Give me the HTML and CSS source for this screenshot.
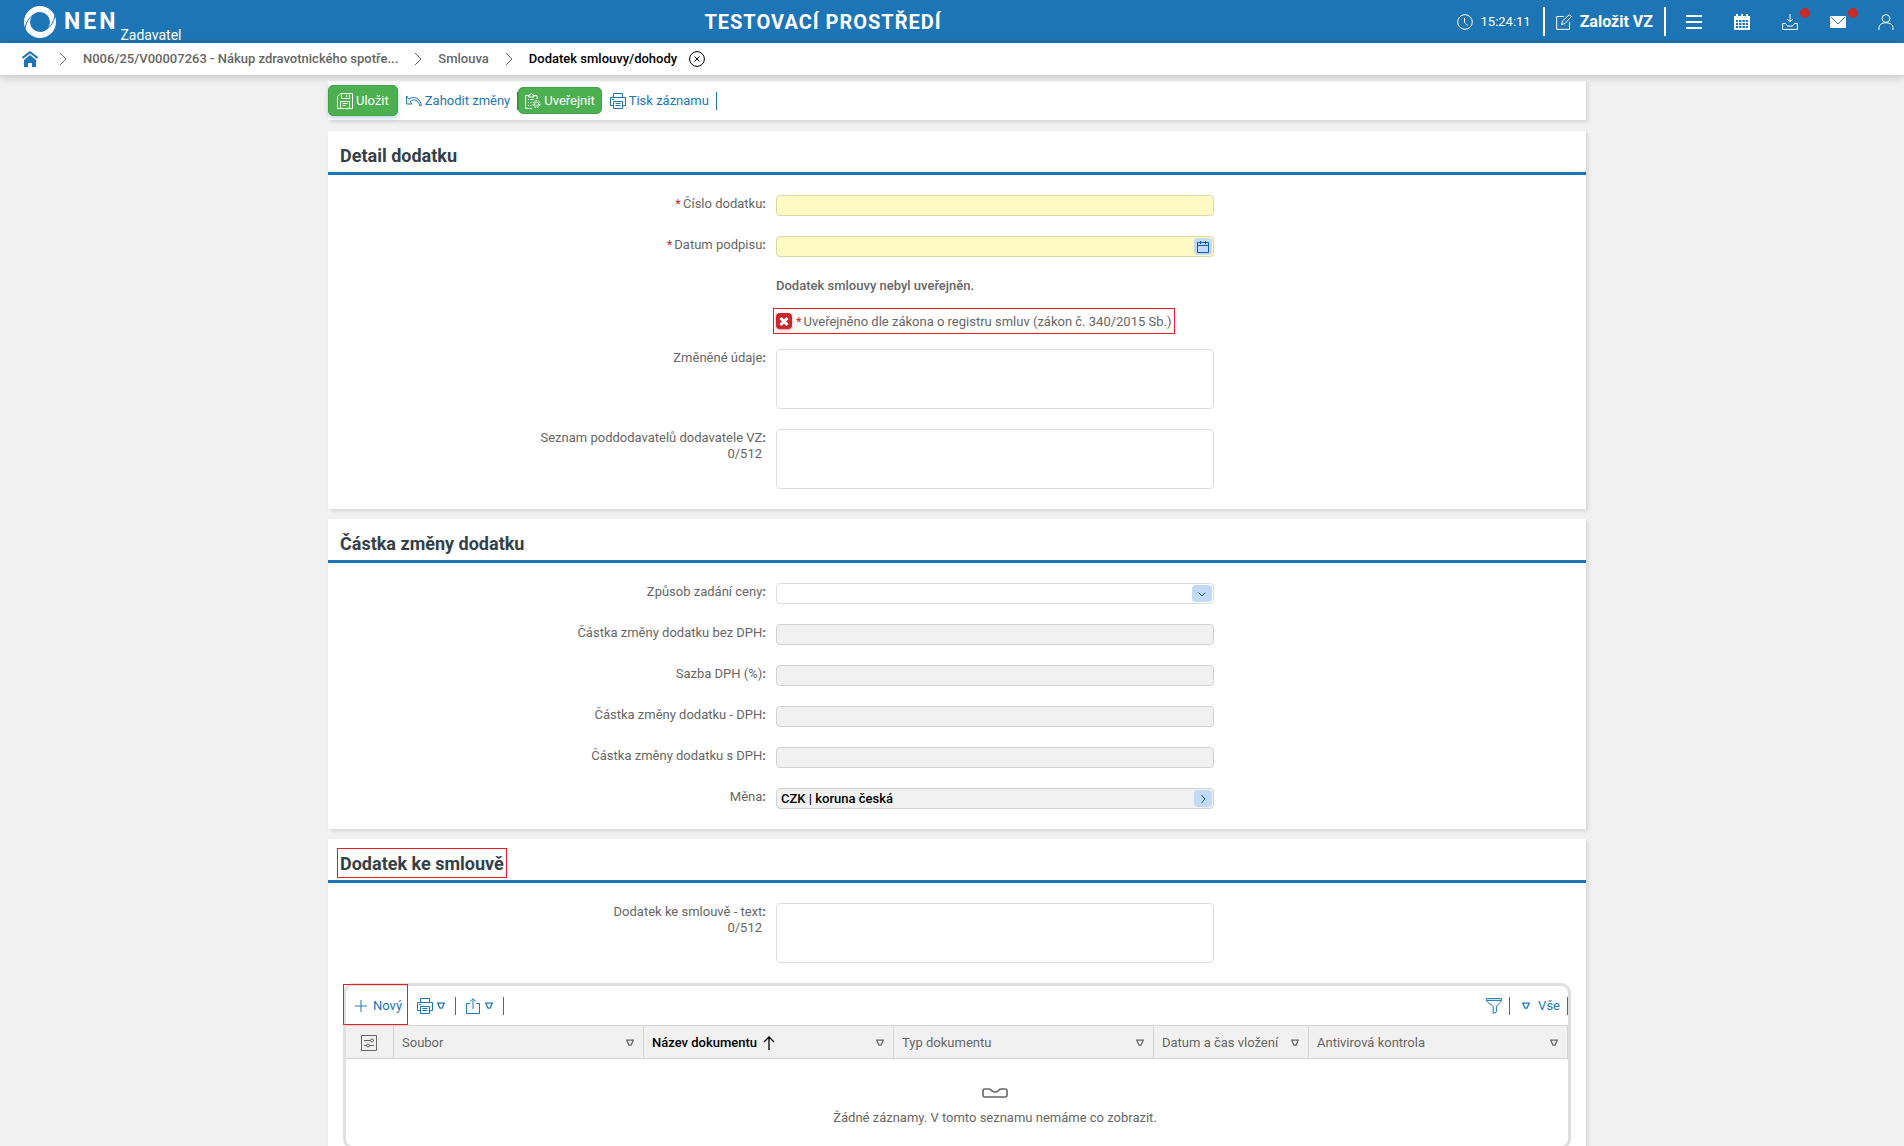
FILE: index.html
```html
<!DOCTYPE html>
<html lang="cs">
<head>
    <meta charset="utf-8">
    <title>NEN - Dodatek smlouvy/dohody</title>
    <meta name="viewport" content="width=device-width, initial-scale=1">
    <link rel="stylesheet" href="styles.css">
</head>
<body>
<svg class="sprite" aria-hidden="true">
    <symbol id="i-chevron" viewBox="0 0 16 16"><path d="M5 2l6 6-6 6"/></symbol>
    <symbol id="i-triangle" viewBox="0 0 8 8"><path d="M.8 1.2h6.4L5 6.2H3z"/></symbol>
    <symbol id="i-printer" viewBox="0 0 16 16"><path d="M3.5 4.500V.5h9v4M3.500 12.500h-3v-8h15v8h-3M3.500 8.500h9v7h-9zM5.500 10.500h5M5.500 12.500h5M2 6.500h2"/></symbol>
</svg>

<header class="topbar">
    <a class="brand" href="#">
        <svg width="32" height="32" viewBox="0 0 32 32">
            <path class="solid" fill-rule="evenodd" d="M16 0a16 16 0 0 1 0 32 16 16 0 0 1 0-32zM16 6a10 10 0 0 0 0 20 10 10 0 0 0 0-20z"/>
            <path class="swirl" d="M1 23C2 15 7 8 15 6.500M31 9c-1 8-6 15-14 16.500"/>
        </svg>
        <span class="brand-name">NEN</span>
        <span class="brand-role">Zadavatel</span>
    </a>
    <strong class="environment">TESTOVACÍ PROSTŘEDÍ</strong>
    <div class="tools">
        <span class="clock">
            <svg class="icon" viewBox="0 0 16 16"><circle cx="8" cy="8" r="7.300"/><path d="M7.500 4v4.500l3 3"/></svg>
            <time>15:24:11</time>
        </span>
        <button class="create" type="button">
            <svg class="icon" viewBox="0 0 16 16"><path d="M8 2.500H.7v12.800h12.800V8M5.500 10.500l1-3.500 6.800-6.300 2 2L9 9.500z"/></svg>
            Založit VZ
        </button>
        <nav class="shortcuts">
            <button type="button" aria-label="Menu">
                <svg class="icon burger" viewBox="0 0 16 16"><path d="M0 2h16M0 8h16M0 14h16"/></svg>
            </button>
            <button type="button" aria-label="Kalendář">
                <svg class="icon" viewBox="0 0 16 16"><path class="solid" fill-rule="evenodd" d="M0 2h2V0h2v2h3V0h2v2h3V0h2v2h2v14H0zM2 6v8h12V6z"/><path d="M2 8.500h12M2 11.500h12M4.500 6v8M8 6v8M11.500 6v8"/></svg>
            </button>
            <button type="button" aria-label="Stažené soubory">
                <svg class="icon" viewBox="0 0 16 16"><path d="M8 0v8M5 5l3 3 3-3M.6 9.600h3l2 2.500h4.800l2-2.500h3v5.800H.6z"/></svg>
                <span class="badge"></span>
            </button>
            <button type="button" aria-label="Zprávy">
                <svg class="icon" viewBox="0 0 16 16"><rect class="solid" y="2" width="16" height="12" rx="1"/><path class="cut" d="M1 3l7 7 7-7"/></svg>
                <span class="badge"></span>
            </button>
            <button type="button" aria-label="Uživatel">
                <svg class="icon" viewBox="0 0 16 16"><circle cx="8" cy="4.500" r="3.900"/><path d="M1 16v-2c0-3 2.500-5.200 7-5.200s7 2.200 7 5.200v2"/></svg>
            </button>
        </nav>
    </div>
</header>

<nav class="breadcrumb">
    <a class="home" href="#" aria-label="Domů">
        <svg class="icon" viewBox="0 0 16 16"><path class="solid" d="M8 4l6 5v7h-4v-4H6v4H2V9z"/><path class="roof" d="M.5 7L8 1.200 15.500 7"/></svg>
    </a>
    <svg class="icon" viewBox="0 0 16 16"><use href="#i-chevron"/></svg>
    <a href="#">N006/25/V00007263 - Nákup zdravotnického spotře...</a>
    <svg class="icon" viewBox="0 0 16 16"><use href="#i-chevron"/></svg>
    <a href="#">Smlouva</a>
    <svg class="icon" viewBox="0 0 16 16"><use href="#i-chevron"/></svg>
    <a class="current" href="#">Dodatek smlouvy/dohody</a>
    <button class="close" type="button" aria-label="Zavřít">
        <svg class="icon" viewBox="0 0 16 16"><circle cx="8" cy="8" r="7.400"/><path d="M5.500 5.500l5 5M10.500 5.500l-5 5"/></svg>
    </button>
</nav>

<main class="page">
    <div class="actions">
        <button class="btn save" type="button">
            <svg class="icon" viewBox="0 0 16 16"><path d="M3.500.5h12v15H.5v-12zM4.500.5v5h8v-5M9.500 2v2M3.500 15.500v-7h9v7M5.500 10.500h5M5.500 12.500h3"/></svg>
            Uložit
        </button>
        <button class="btn" type="button">
            <svg class="icon" viewBox="0 0 16 16"><path d="M.6 3v8h5.400L4 8.500c4-3 8.500-1.500 9.800 4.200h1.600C14.800 5.500 8 2.500 2.800 6z"/></svg>
            Zahodit změny
        </button>
        <span class="divider"></span>
        <button class="btn publish" type="button">
            <svg class="icon" viewBox="0 0 16 16"><path d="M7 15.500H.6v-13h3M9 2.500h3V6M3.600 4V2h1.500C5.300 0 7.300 0 7.500 2H9v2zM3 6.500h1M5.500 6.500h3M3 9.500h1M5.500 9.500h1M3 12.500h1M5.500 12.500h1"/><circle class="cog" cx="11.500" cy="11" r="3.500"/><circle cx="11.500" cy="11" r="2"/></svg>
            Uveřejnit
        </button>
        <button class="btn" type="button">
            <svg class="icon" viewBox="0 0 16 16"><use href="#i-printer"/></svg>
            Tisk záznamu
        </button>
        <span class="divider"></span>
    </div>

    <section class="panel">
        <h2>Detail dodatku</h2>
        <div class="fields">
            <label for="cislo"><i>*</i>Číslo dodatku<b>:</b></label>
            <div class="control"><input class="required" id="cislo" type="text"></div>

            <label for="datum"><i>*</i>Datum podpisu<b>:</b></label>
            <div class="control">
                <input class="required" id="datum" type="text">
                <button class="picker" type="button" aria-label="Vybrat datum">
                    <svg viewBox="0 0 12 12"><path d="M.5 1.500h11v10H.5zM.5 4.500h11M3.500 0v3M8.500 0v3"/></svg>
                </button>
            </div>

            <p class="note">Dodatek smlouvy nebyl uveřejněn.</p>

            <div class="check marked">
                <input id="registr" type="checkbox">
                <label for="registr"><i>*</i>Uveřejněno dle zákona o registru smluv (zákon č. 340/2015 Sb.)</label>
            </div>

            <label for="udaje">Změněné údaje<b>:</b></label>
            <textarea id="udaje"></textarea>

            <label for="seznam">Seznam poddodavatelů dodavatele VZ<b>:</b><small>0/512</small></label>
            <textarea id="seznam"></textarea>
        </div>
    </section>

    <section class="panel">
        <h2>Částka změny dodatku</h2>
        <div class="fields">
            <label for="zpusob">Způsob zadání ceny<b>:</b></label>
            <div class="control">
                <select id="zpusob"><option></option></select>
                <span class="picker wide"><svg viewBox="0 0 12 12"><path d="M2.500 4.500L6 8l3.500-3.500"/></svg></span>
            </div>

            <label for="bez-dph">Částka změny dodatku bez DPH<b>:</b></label>
            <div class="control"><input id="bez-dph" type="text" disabled></div>

            <label for="sazba">Sazba DPH (%)<b>:</b></label>
            <div class="control"><input id="sazba" type="text" disabled></div>

            <label for="dph">Částka změny dodatku - DPH<b>:</b></label>
            <div class="control"><input id="dph" type="text" disabled></div>

            <label for="s-dph">Částka změny dodatku s DPH<b>:</b></label>
            <div class="control"><input id="s-dph" type="text" disabled></div>

            <label for="mena">Měna<b>:</b></label>
            <div class="control">
                <input id="mena" type="text" value="CZK | koruna česká" disabled>
                <button class="picker" type="button" aria-label="Detail měny">
                    <svg viewBox="0 0 12 12"><path d="M4.500 2L8 6l-3.500 4"/></svg>
                </button>
            </div>
        </div>
    </section>

    <section class="panel">
        <h2><span class="marked">Dodatek ke smlouvě</span></h2>
        <div class="fields">
            <label for="text">Dodatek ke smlouvě - text<b>:</b><small>0/512</small></label>
            <textarea id="text"></textarea>
        </div>

        <div class="grid">
            <div class="grid-tools">
                <button class="new marked" type="button">
                    <svg class="icon" viewBox="0 0 16 16"><path d="M8 2v12M2 8h12"/></svg>
                    Nový
                </button>
                <button type="button" aria-label="Tisk">
                    <svg class="icon" viewBox="0 0 16 16"><use href="#i-printer"/></svg>
                    <svg class="triangle"><use href="#i-triangle"/></svg>
                </button>
                <span class="divider"></span>
                <button type="button" aria-label="Export">
                    <svg class="icon" viewBox="0 0 16 16"><path d="M5 5.500H1.500v10h13v-10H11M8 11V1M5 3.700L8 .7l3 3"/></svg>
                    <svg class="triangle"><use href="#i-triangle"/></svg>
                </button>
                <span class="divider"></span>
                <span class="spacer"></span>
                <button class="filter" type="button" aria-label="Filtr">
                    <svg class="icon" viewBox="0 0 16 16"><path d="M.6.6h14.800v1.800c0 2.500-5 4.500-5 6.500V14l-3.200 1.400V8.900c0-2-6.600-4-6.600-6.500zM.6 2.400h14.800"/></svg>
                </button>
                <span class="divider"></span>
                <button class="all" type="button">
                    <svg class="triangle"><use href="#i-triangle"/></svg>
                    Vše
                </button>
                <span class="divider"></span>
            </div>
            <table>
                <thead>
                <tr>
                    <th class="col-setup">
                        <svg class="icon" viewBox="0 0 16 16"><path d="M.5.500h15v15H.5zM3 5.500h6.500M12.500 5.500h.5M3 10.500h2.500M8.500 10.500H13"/><circle cx="11" cy="5.500" r="1.500"/><circle cx="7" cy="10.500" r="1.500"/></svg>
                    </th>
                    <th class="col-file"><span>Soubor <svg class="triangle"><use href="#i-triangle"/></svg></span></th>
                    <th class="col-name sorted">
                        <span>Název dokumentu <svg class="sort" viewBox="0 0 12 14"><path d="M6 14V1M1 6l5-5 5 5"/></svg> <svg class="triangle"><use href="#i-triangle"/></svg></span>
                    </th>
                    <th class="col-type"><span>Typ dokumentu <svg class="triangle"><use href="#i-triangle"/></svg></span></th>
                    <th class="col-date"><span>Datum a čas vložení <svg class="triangle"><use href="#i-triangle"/></svg></span></th>
                    <th class="col-scan"><span>Antivirová kontrola <svg class="triangle"><use href="#i-triangle"/></svg></span></th>
                </tr>
                </thead>
                <tbody>
                <tr>
                    <td colspan="6">
                        <svg class="tray" viewBox="0 0 26 10"><path d="M3 1h4c2 0 3 3 6 3s4-3 6-3h4c1 0 2 1 2 2v4c0 1-1 2-2 2H3C2 9 1 8 1 7V3c0-1 1-2 2-2z"/></svg>
                        Žádné záznamy. V tomto seznamu nemáme co zobrazit.
                    </td>
                </tr>
                </tbody>
            </table>
        </div>
    </section>
</main>
</body>
</html>
```

FILE: styles.css
```css
* {
    box-sizing: border-box
}

body {
    margin: 0;
    height: 100vh;
    display: flex;
    flex-direction: column;
    overflow: hidden;
    background: #f1f1f1;
    color: #666;
    font: 13px/16px Roboto, sans-serif
}

a {
    color: inherit;
    text-decoration: none
}

button {
    display: flex;
    align-items: center;
    margin: 0;
    padding: 0;
    border: 0;
    background: none;
    color: inherit;
    font: inherit;
    cursor: pointer
}

svg {
    display: block;
    flex: none;
    fill: none;
    stroke: currentColor
}

.sprite {
    position: absolute;
    width: 0;
    height: 0
}

.icon {
    width: 16px;
    height: 16px
}

.solid {
    fill: currentColor;
    stroke: none
}

.triangle {
    width: 8px;
    height: 8px;
    stroke-width: 1.3
}

.divider {
    width: 1px;
    height: 18px;
    background: #1d75b5
}

.spacer {
    flex: 1
}

/* red frame drawn round an item */
.marked {
    position: relative
}

.marked::after {
    content: "";
    position: absolute;
    inset: 0;
    border: 1px solid #ed1c24;
    pointer-events: none
}

/* top bar */
.topbar {
    flex: none;
    display: flex;
    justify-content: space-between;
    align-items: center;
    height: 43px;
    padding: 0 10px 0 24px;
    background: #1d75b5;
    color: #fff
}

.brand {
    display: flex;
    align-items: center;
    height: 43px
}

.swirl {
    stroke: #1d75b5
}

.brand-name {
    margin-left: 8px;
    font-size: 23px;
    font-weight: 700;
    letter-spacing: 3px
}

.brand-role {
    align-self: flex-end;
    margin-left: 2px;
    font-size: 14px
}

.environment {
    margin-left: 8px;
    font-size: 20px;
    letter-spacing: 1px
}

.tools, .clock, .create, .shortcuts {
    display: flex;
    align-items: center
}

.clock {
    gap: 8px;
    padding-right: 12px
}

.create {
    gap: 8px;
    height: 29px;
    padding: 0 11px;
    border: solid #fff;
    border-width: 0 2px;
    font-size: 16px;
    font-weight: 700
}

.shortcuts {
    gap: 32px;
    margin-left: 20px
}

.shortcuts button {
    position: relative
}

.burger {
    stroke-width: 2
}

.cut {
    stroke: #1d75b5
}

.badge {
    position: absolute;
    top: -6px;
    right: -12px;
    width: 10px;
    height: 10px;
    border-radius: 50%;
    background: #c92a2a
}

/* breadcrumb */
.breadcrumb {
    position: relative;
    z-index: 1;
    flex: none;
    display: flex;
    align-items: center;
    gap: 12px;
    height: 32px;
    padding: 0 22px;
    background: #fff;
    box-shadow: 0 2px 8px rgba(0, 0, 0, .2);
    font-weight: 500
}

.breadcrumb .home {
    color: #1d75b5;
    margin-right: 5px
}

.roof {
    stroke-width: 2
}

.breadcrumb .current, .breadcrumb .close {
    color: #000
}

/* page */
.page {
    flex: 1;
    overflow: auto;
    scrollbar-width: none;
    padding: 6px 0 10px 10px
}

.actions, .panel {
    max-width: 1258px;
    margin: 0 auto 10px;
    background: #fff;
    box-shadow: 2px 2px 4px rgba(0, 0, 0, .12)
}

.actions {
    display: flex;
    align-items: center;
    height: 39px;
    margin-bottom: 11px;
    color: #1d75b5
}

.btn {
    gap: 3px;
    height: 27px;
    padding: 0 7px 0 8px
}

.save, .publish {
    border: 1px solid #45a049;
    border-radius: 5px;
    background: #4caf50;
    color: #fff
}

.publish {
    padding: 0 6px
}

.save {
    height: 31px;
    padding: 0 8px;
    box-shadow: 0 2px 4px rgba(29, 117, 181, .3)
}

.cog {
    stroke-dasharray: 2 1
}

.panel h2 {
    margin: 0;
    padding: 14px 12px 6px;
    border-bottom: 3px solid #1d75b5;
    color: #343f49;
    font-size: 18px;
    font-weight: 700;
    line-height: 21px
}

h2 .marked::after {
    inset: -5px -3px -4px
}

.fields {
    display: grid;
    grid-template-columns: 438fr 438fr 362fr;
    gap: 20px 10px;
    padding: 20px 0
}

.fields > label {
    grid-column: 1;
    padding-top: 1px;
    text-align: right
}

.fields i {
    margin-right: 2px;
    color: #c92a2a;
    font-style: normal
}

.fields small {
    display: block;
    padding-right: 4px;
    font-size: 13px
}

.control, .note, .check, textarea {
    grid-column: 2
}

.control {
    position: relative;
    height: 21px
}

.control input, .control select, textarea {
    display: block;
    width: 100%;
    height: 21px;
    margin: 0;
    padding: 0 4px;
    border: 1px solid #dcdcdc;
    border-radius: 4px;
    background: #fff;
    font: inherit;
    appearance: none
}

textarea {
    height: 60px;
    resize: none
}

.control .required {
    border-color: #ddd7a8;
    background: #fff9c4
}

.control input:disabled {
    border-color: #d2d2d2;
    background: #f1f1f1;
    color: #000;
    font-weight: 500
}

.picker {
    position: absolute;
    top: 2px;
    right: 2px;
    display: flex;
    justify-content: center;
    align-items: center;
    width: 18px;
    height: 17px;
    border-radius: 4px;
    background: #c2daf5;
    color: #0d5cab;
    pointer-events: none
}

.picker.wide {
    width: 20px
}

.picker svg {
    width: 12px;
    height: 12px
}

.note {
    height: 16px;
    margin: 0;
    padding-top: 1px;
    font-weight: 500
}

.check {
    display: flex;
    align-items: center;
    justify-self: start;
    gap: 4px;
    height: 16px;
    white-space: nowrap
}

.check label {
    padding-top: 1px
}

.check::after {
    inset: -5px -4px -5px -3px
}

.check input {
    position: relative;
    width: 16px;
    height: 16px;
    margin: 0;
    border-radius: 4px;
    background: #c9262d;
    box-shadow: 0 1px 3px rgba(201, 38, 45, .5);
    appearance: none
}

.check input::before, .check input::after {
    content: "";
    position: absolute;
    top: 7px;
    left: 3px;
    width: 10px;
    height: 3px;
    background: #fff;
    transform: rotate(45deg)
}

.check input::after {
    transform: rotate(-45deg)
}

/* document list */
.grid {
    margin: 0 15px 20px;
    border: 3px solid #dfdfdf;
    border-radius: 10px
}

.grid-tools {
    display: flex;
    align-items: center;
    height: 39px;
    padding-top: 1px;
    color: #1d75b5
}

.grid-tools button {
    gap: 4px;
    padding: 0 10px 0 9px
}

.grid-tools .new {
    gap: 4px;
    height: 38px;
    padding: 0 6px 0 7px
}

.grid .new::after {
    inset: -3px 0 0 -3px
}

.grid-tools .filter {
    padding: 0 7px
}

.grid-tools .all {
    gap: 8px;
    padding: 0 7px 0 12px
}

.grid table {
    width: 100%;
    table-layout: fixed;
    border-collapse: separate;
    border-spacing: 0
}

th {
    height: 34px;
    padding: 1px 9px 0 8px;
    border: solid #d5d5d5;
    border-width: 1px 1px 1px 0;
    background: #f1f1f1;
    font-weight: 400;
    text-align: left
}

th span {
    display: flex;
    align-items: center;
    gap: 6px
}

th .triangle {
    margin-left: auto
}

th .icon {
    margin: auto
}

.sorted {
    color: #000;
    font-weight: 500
}

.sorted .triangle {
    color: #666
}

.sort {
    width: 12px;
    height: 14px;
    stroke-width: 1.3
}

.col-setup {
    width: 48px
}

.col-file, .col-name {
    width: 250px
}

.col-type {
    width: 260px
}

.col-date {
    width: 155px
}

td {
    height: 87px;
    padding: 8px 0 0 76px;
    text-align: center
}

.tray {
    width: 26px;
    height: 10px;
    margin: 0 auto 12px;
    stroke-width: 1.6
}
```
